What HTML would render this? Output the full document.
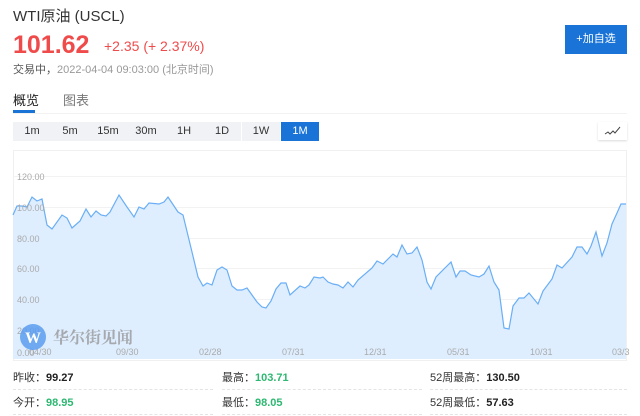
<!DOCTYPE html>
<html><head><meta charset="utf-8"><style>
*{margin:0;padding:0;box-sizing:border-box}
body{width:640px;height:416px;background:#fff;font-family:"Liberation Sans","Noto Sans CJK SC",sans-serif;position:relative;overflow:hidden;color:#333}
.a{position:absolute;white-space:nowrap}
.btn{position:absolute;top:122px;height:19px;width:38px;background:#f0f2f5;font-size:11px;color:#333;text-align:center;line-height:19px}
.lbl{font-size:11px;color:#333}
.v{font-weight:bold;color:#222}
.g{font-weight:bold;color:#2eb872}
.dash{position:absolute;height:0;border-top:1px dashed #e4e4e4}
</style></head><body>
<div class="a" style="left:13px;top:5px;font-size:15px;color:#333">WTI原油 (USCL)</div>
<div class="a" style="left:13px;top:31px;font-size:25px;font-weight:bold;color:#f04b4b">101.62</div>
<div class="a" style="left:104px;top:38px;font-size:14px;color:#f04b4b">+2.35 (+ 2.37%)</div>
<div class="a" style="left:13px;top:61px;font-size:11px;color:#999"><span style="color:#555">交易中，</span>2022-04-04 09:03:00 (北京时间)</div>
<div class="a" style="left:565px;top:25px;width:62px;height:29px;background:#1a74d8;color:#fff;font-size:11px;line-height:29px;text-align:center">+加自选</div>
<div class="a" style="left:13px;top:90px;font-size:13px;color:#222">概览</div>
<div class="a" style="left:63px;top:90px;font-size:13px;color:#777">图表</div>
<div class="a" style="left:13px;top:110px;width:22px;height:3px;background:#1a74d8"></div>
<div class="a" style="left:13px;top:113px;width:614px;height:1px;background:#f2f2f2"></div>
<div class="btn" style="left:13px">1m</div>
<div class="btn" style="left:51px">5m</div>
<div class="btn" style="left:89px">15m</div>
<div class="btn" style="left:127px">30m</div>
<div class="btn" style="left:165px">1H</div>
<div class="btn" style="left:203px">1D</div>
<div class="btn" style="left:242px">1W</div>
<div class="btn" style="left:281px;background:#1a74d8;color:#fff">1M</div>
<div class="a" style="left:598px;top:122px;width:29px;height:18px;background:#fff;box-shadow:0 1px 2px rgba(0,0,0,.15)">
<svg width="29" height="18"><path d="M7 12 L10 10 L12 12 L15 9 L17 11 L22 5" fill="none" stroke="#444" stroke-width="1"/></svg></div>
<svg class="a" style="left:0;top:0" width="640" height="416">
<rect x="13.5" y="150.5" width="613" height="210" fill="none" stroke="#f0f0f0"/>
<g stroke="#f2f2f2" stroke-width="1">
<line x1="13" y1="176.5" x2="627" y2="176.5"/><line x1="13" y1="207.5" x2="627" y2="207.5"/>
<line x1="13" y1="238.5" x2="627" y2="238.5"/><line x1="13" y1="268.5" x2="627" y2="268.5"/>
<line x1="13" y1="299.5" x2="627" y2="299.5"/><line x1="13" y1="330.5" x2="627" y2="330.5"/>
</g>
<path d="M13 215 L17 206 L22 206 L27 207 L32 197 L37 201 L42 199 L47 225 L52 229 L62 215 L67 218 L72 228 L80 221 L86 209 L91 217 L96 211 L101 215 L106 216 L110 212 L119 195 L127 207 L134 217 L139 207 L144 209 L149 203 L159 204 L164 202 L168 197 L178 212 L183 215 L192 252 L198 277 L203 286 L207 283 L212 285 L217 270 L222 267 L227 270 L232 286 L237 290 L242 290 L247 288 L257 302 L262 307 L266 308 L271 301 L276 289 L281 283 L286 283 L290 295 L300 286 L305 288 L309 285 L314 277 L320 278 L323 277 L328 282 L333 284 L338 285 L343 288 L348 282 L353 287 L358 280 L372 268 L377 261 L383 264 L393 254 L397 257 L402 245 L407 254 L412 253 L417 247 L422 260 L427 282 L431 289 L436 277 L451 262 L456 277 L460 271 L465 271 L471 275 L479 277 L484 274 L489 266 L494 282 L499 290 L504 328 L509 329 L513 306 L519 298 L524 298 L529 293 L538 304 L543 291 L552 279 L557 265 L562 268 L572 257 L577 247 L582 247 L587 254 L591 246 L596 232 L602 256 L607 243 L612 224 L617 213 L621 204 L626 204 L626 359 L13 359 Z" fill="#deeeff"/>
<path d="M13 215 L17 206 L22 206 L27 207 L32 197 L37 201 L42 199 L47 225 L52 229 L62 215 L67 218 L72 228 L80 221 L86 209 L91 217 L96 211 L101 215 L106 216 L110 212 L119 195 L127 207 L134 217 L139 207 L144 209 L149 203 L159 204 L164 202 L168 197 L178 212 L183 215 L192 252 L198 277 L203 286 L207 283 L212 285 L217 270 L222 267 L227 270 L232 286 L237 290 L242 290 L247 288 L257 302 L262 307 L266 308 L271 301 L276 289 L281 283 L286 283 L290 295 L300 286 L305 288 L309 285 L314 277 L320 278 L323 277 L328 282 L333 284 L338 285 L343 288 L348 282 L353 287 L358 280 L372 268 L377 261 L383 264 L393 254 L397 257 L402 245 L407 254 L412 253 L417 247 L422 260 L427 282 L431 289 L436 277 L451 262 L456 277 L460 271 L465 271 L471 275 L479 277 L484 274 L489 266 L494 282 L499 290 L504 328 L509 329 L513 306 L519 298 L524 298 L529 293 L538 304 L543 291 L552 279 L557 265 L562 268 L572 257 L577 247 L582 247 L587 254 L591 246 L596 232 L602 256 L607 243 L612 224 L617 213 L621 204 L626 204" fill="none" stroke="#6aaef5" stroke-width="1.2"/>
<g font-family="Liberation Sans" font-size="9" fill="#aaa">
<text x="17" y="180">120.00</text><text x="17" y="211">100.00</text><text x="17" y="242">80.00</text>
<text x="17" y="272">60.00</text><text x="17" y="303">40.00</text><text x="17" y="334">20.00</text><text x="17" y="356">0.00</text>
<text x="29" y="355">04/30</text><text x="116" y="355">09/30</text><text x="199" y="355">02/28</text>
<text x="282" y="355">07/31</text><text x="364" y="355">12/31</text><text x="447" y="355">05/31</text>
<text x="530" y="355">10/31</text><text x="612" y="355">03/3</text>
</g>
<circle cx="33" cy="337" r="13" fill="#5a9cf0" opacity="0.85"/>
<text x="33" y="343" font-family="Liberation Serif" font-size="16" font-weight="bold" fill="#fff" text-anchor="middle">W</text>
<text x="53" y="343" font-family="Noto Serif CJK SC,serif" font-size="16" font-weight="bold" fill="#999" opacity="0.8">华尔街见闻</text>
</svg>
<div class="a lbl" style="left:13px;top:369px">昨收：<span class="v">99.27</span></div>
<div class="a lbl" style="left:222px;top:369px">最高：<span class="g">103.71</span></div>
<div class="a lbl" style="left:430px;top:369px">52周最高：<span class="v">130.50</span></div>
<div class="dash" style="left:13px;top:389px;width:200px"></div>
<div class="dash" style="left:222px;top:389px;width:200px"></div>
<div class="dash" style="left:430px;top:389px;width:197px"></div>
<div class="a lbl" style="left:13px;top:394px">今开：<span class="g">98.95</span></div>
<div class="a lbl" style="left:222px;top:394px">最低：<span class="g">98.05</span></div>
<div class="a lbl" style="left:430px;top:394px">52周最低：<span class="v">57.63</span></div>
<div class="dash" style="left:13px;top:414px;width:200px"></div>
<div class="dash" style="left:222px;top:414px;width:200px"></div>
<div class="dash" style="left:430px;top:414px;width:197px"></div>
</body></html>
